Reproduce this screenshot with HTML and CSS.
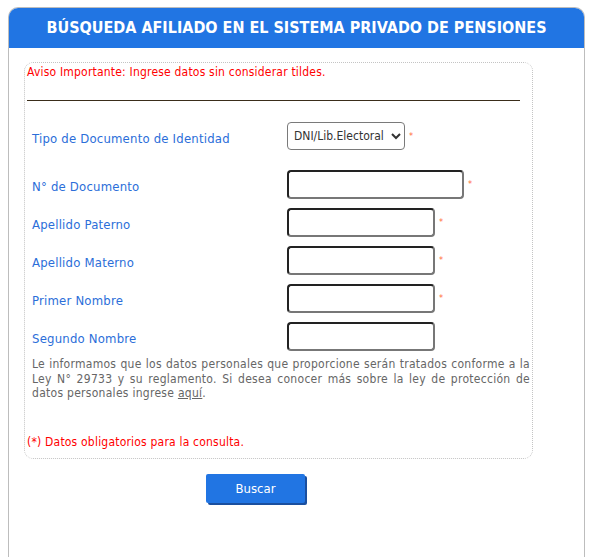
FILE: index.html
```html
<!DOCTYPE html>
<html lang="es">
<head>
<meta charset="utf-8">
<title>Búsqueda Afiliado</title>
<link rel="stylesheet" href="styles.css">
</head>
<body>
<div class="panel">
  <div class="header">BÚSQUEDA AFILIADO EN EL SISTEMA PRIVADO DE PENSIONES</div>
  <div class="content">
    <div class="box">
      <div class="aviso">Aviso Importante: Ingrese datos sin considerar tildes.</div>
      <div class="rule"></div>
      <div class="form">
        <div class="row row-first">
          <label class="lbl">Tipo de Documento de Identidad</label>
          <div class="field">
            <select class="sel"><option>DNI/Lib.Electoral</option></select>
            <span class="req">*</span>
          </div>
        </div>
        <div class="row row-doc">
          <label class="lbl">N° de Documento</label>
          <div class="field">
            <input class="inp inp-wide" type="text">
            <span class="req">*</span>
          </div>
        </div>
        <div class="row">
          <label class="lbl">Apellido Paterno</label>
          <div class="field">
            <input class="inp" type="text">
            <span class="req">*</span>
          </div>
        </div>
        <div class="row">
          <label class="lbl">Apellido Materno</label>
          <div class="field">
            <input class="inp" type="text">
            <span class="req">*</span>
          </div>
        </div>
        <div class="row">
          <label class="lbl">Primer Nombre</label>
          <div class="field">
            <input class="inp" type="text">
            <span class="req">*</span>
          </div>
        </div>
        <div class="row">
          <label class="lbl">Segundo Nombre</label>
          <div class="field">
            <input class="inp" type="text">
          </div>
        </div>
      </div>
      <p class="info">Le informamos que los datos personales que proporcione serán tratados conforme a la Ley N° 29733 y su reglamento. Si desea conocer más sobre la ley de protección de datos personales ingrese <a href="#">aquí</a>.</p>
      <div class="oblig">(*) Datos obligatorios para la consulta.</div>
    </div>
    <div class="actions">
      <button class="btn" type="button">Buscar</button>
    </div>
  </div>
</div>
</body>
</html>
```
FILE: styles.css
```css
* { box-sizing: border-box; }
body {
  margin: 0;
  background: #fff;
  font-family: "DejaVu Sans Condensed", "DejaVu Sans", sans-serif;
}
.panel {
  margin: 7px 0 0 8px;
  width: 577px;
  min-height: 560px;
  border: 1px solid #bdbdbd;
  border-bottom: none;
  border-radius: 10px 10px 0 0;
}
.header {
  height: 40px;
  background: #2175e3;
  border-radius: 9px 9px 0 0;
  color: #fff;
  font-weight: bold;
  font-size: 16px;
  line-height: 40px;
  text-align: center;
}
.content {
  padding: 14px 0 0 15px;
}
.box {
  width: 509px;
  border: 1px dotted #c4c4c4;
  border-radius: 9px;
  padding: 2px 0 9px 2px;
}
.aviso {
  color: #f00;
  font-size: 12px;
  line-height: 14px;
  letter-spacing: 0.2px;
}
.rule {
  margin-top: 21px;
  width: 493px;
  height: 1px;
  background: #3a2d1a;
}
.form {
  display: flex;
  flex-direction: column;
  gap: 9px;
  margin-top: 21px;
}
.row {
  display: flex;
  align-items: center;
  height: 29px;
}
.row-first { height: 28px; margin-bottom: 11px; }
.lbl {
  width: 260px;
  padding-left: 5px;
  padding-top: 4px;
  color: #2b6ed9;
  font-size: 13px;
  letter-spacing: 0.2px;
}
.field {
  display: flex;
  align-items: flex-start;
  height: 100%;
}
.sel {
  width: 118px;
  height: 28px;
  border: 1px solid #7a7a7a;
  border-radius: 4px;
  background: #fff;
  color: #333;
  font-family: inherit;
  font-size: 12px;
  padding: 0 2px;
}
.inp {
  width: 148px;
  height: 29px;
  border: 2px solid;
  border-color: #222 #777 #777 #222;
  border-radius: 4px;
  background: #fff;
}
.inp-wide { width: 177px; }
.req {
  color: #ff6a3a;
  font-size: 9px;
  line-height: 9px;
  margin-left: 4px;
  margin-top: 10px;
}
.info {
  margin: 6px 2px 0 5px;
  color: #666;
  font-size: 12px;
  line-height: 14.5px;
  letter-spacing: 0.28px;
  text-align: justify;
}
.info a { color: #666; }
.oblig {
  margin-top: 34px;
  color: #f00;
  font-size: 12px;
  line-height: 14px;
  letter-spacing: 0.2px;
}
.actions {
  padding: 15px 0 0 182px;
}
.btn {
  width: 99px;
  height: 29px;
  background: #2175e3;
  border: none;
  border-radius: 2px;
  box-shadow: 2px 2px 0 #1a4f9f;
  color: #fff;
  font-family: inherit;
  font-size: 13px;
  cursor: pointer;
}
```
